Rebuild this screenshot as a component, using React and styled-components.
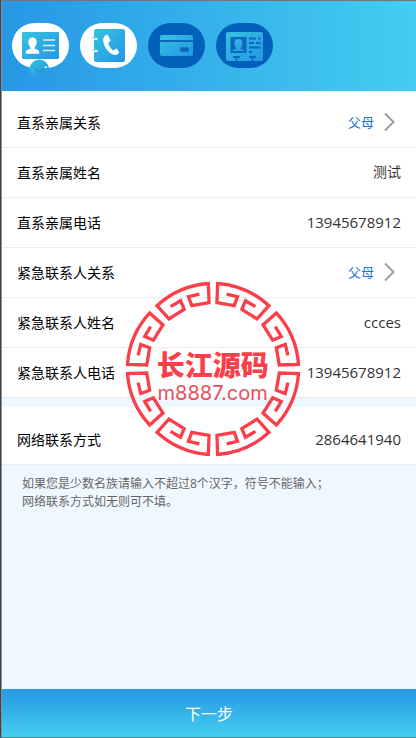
import React from "react";
import styled, { createGlobalStyle } from "styled-components";

const cjk = `"Noto Sans CJK SC", sans-serif`;

const GlobalStyle = createGlobalStyle`
  *, *::before, *::after { box-sizing: border-box; }
  body { margin: 0; font-family: "Open Sans", ${cjk}; }
`;

const Screen = styled.div`
  position: relative;
  display: flex;
  flex-direction: column;
  min-height: 100vh;
  border: solid #747474;
  border-width: 1px 0 1px 1px;
  border-left-color: #414146;
  padding-left: 1px;
  background: #f0f8ff;
  box-shadow: inset 1px 0 #8a8f95;
`;

const Steps = styled.nav`
  display: flex;
  gap: 11px;
  padding: 22px 10px 23px;
  background: linear-gradient(90deg, #2797e6, #44cdf0);
`;

const Step = styled.button`
  display: flex;
  align-items: flex-start;
  width: 57px;
  height: 45px;
  padding: 0;
  border: 0;
  border-radius: 23px;
  background: ${(p) => (p.$done ? "#fff" : "#0160b9")};
`;

const StepArt = styled.svg`
  flex: none;
  width: 57px;
  height: 52px;
`;

const Form = styled.form`
  flex: 1;
  display: flex;
  flex-direction: column;
`;

const Group = styled.div`
  padding-top: ${(p) => (p.$spaced ? "7px" : "8px")};
  margin-bottom: ${(p) => (p.$spaced ? "9px" : "0")};
  background: #fff;
`;

const Row = styled.div`
  display: flex;
  align-items: center;
  gap: 10px;
  height: 50px;
  padding: 0 15px 2px;
  border-bottom: 1px solid #ececec;
`;

const Label = styled.label`
  flex: none;
  font: 14px/20px ${cjk};
  color: #000;
`;

const Value = styled.input`
  flex: 1;
  min-width: 0;
  padding: 0;
  border: 0;
  background: none;
  text-align: right;
  font: ${(p) => (p.$latin ? "15px" : "14px")}/20px "Open Sans", ${cjk};
  color: #333;
`;

const Choice = styled.select`
  flex: 1;
  min-width: 0;
  padding: 0;
  border: 0;
  appearance: none;
  background: none;
  text-align: right;
  text-align-last: right;
  font: 13px/20px ${cjk};
  color: #1b75d0;
`;

const Arrow = styled.svg`
  flex: none;
  width: 11px;
  height: 20px;
  margin-right: 6px;
`;

const Note = styled.p`
  margin: 0;
  padding: 10px 20px;
  font: 12px/18px "Open Sans", ${cjk};
  color: #666;
`;

const Next = styled.button`
  height: 48px;
  margin-top: auto;
  border: 0;
  background: linear-gradient(#2797e6, #45ceef);
  font: 16px/24px ${cjk};
  color: #fff;
`;

const Stamp = styled.div`
  position: absolute;
  left: 51%;
  top: 50%;
  display: grid;
  place-items: center;
  transform: translate(-50%, -50%);
  color: #fa3e4a;
  pointer-events: none;
`;

const StampRing = styled.svg`
  grid-area: 1 / 1;
  width: 175px;
  height: 175px;
`;

const StampText = styled.div`
  grid-area: 1 / 1;
  padding-top: 18px;
  text-align: center;
  white-space: nowrap;
`;

const StampName = styled.div`
  font: 900 28px/28px ${cjk};
`;

const StampSite = styled.div`
  font: 20px/30px Inter, sans-serif;
  color: #e5505a;
`;

function Gradient({ id }) {
  return (
    <defs>
      <linearGradient id={id} x1="0" y1="0" x2="1" y2="1">
        <stop offset="0" stopColor="#35c4de" />
        <stop offset="1" stopColor="#2594e6" />
      </linearGradient>
    </defs>
  );
}

function IdentityArt() {
  return (
    <StepArt viewBox="0 0 57 52" aria-hidden="true">
      <Gradient id="identity" />
      <rect x="10" y="9" width="37" height="27" rx="1" fill="url(#identity)" />
      <path
        fill="#fff"
        d="M20.500 14.500c-2.700 0-4.200 2-4.200 4.800 0 2.100.8 3.800 2 4.800v1.600l-3.200 1.200c-1.200.5-1.400 1.700-1.400 3.900h13.600c0-2.200-.2-3.400-1.400-3.900l-3.200-1.200v-1.600c1.200-1 2-2.700 2-4.800 0-2.800-1.500-4.800-4.200-4.800z"
      />
      <path d="M31 17h12M31 22.500h12M31 27.500h12" stroke="#d3f1fb" strokeWidth="1.700" />
      <path d="M19.500 52a9.700 9.700 0 1 1 15.500 0z" fill="url(#identity)" />
      <path d="M22.500 45.500l5 4 7.500-6.500" fill="none" stroke="#2390d8" strokeWidth="1.300" />
      <path d="M31.500 45l3-2.500.8 2.500z" fill="#c4eefa" />
    </StepArt>
  );
}

function ContactsArt() {
  return (
    <StepArt viewBox="0 0 57 52" aria-hidden="true">
      <Gradient id="contacts" />
      <rect x="14" y="6" width="31" height="33" rx="2.500" fill="url(#contacts)" />
      <path d="M12 14.200h6v2.600h-6zM12 26.400h6v2.600h-6z" fill="#fff" />
      <path
        d="M12.500 14.700h4.500q1.500 0 1.500 1.300t-1.500 1.300M12.500 26.900h4.500q1.500 0 1.500 1.300t-1.500 1.300"
        fill="none"
        stroke="#35b9e2"
        strokeWidth="1"
      />
      <path
        fill="#fff"
        d="M27.500 11.500c-3 .7-4.700 3-4.300 6.500.8 6.500 5.800 12.700 11.300 14 2.500.5 4.200-.9 4.600-3.200l-2.800-3.300-3.200 1.900c-2.200-1.500-4.200-4.500-4.900-7.400l2.400-2.300z"
      />
    </StepArt>
  );
}

function BankCardArt() {
  return (
    <StepArt viewBox="0 0 57 52" aria-hidden="true">
      <Gradient id="bankcard" />
      <rect x="12" y="12" width="33" height="21" rx="2" fill="url(#bankcard)" />
      <path d="M12 18h33" stroke="#0a69be" strokeWidth="2.200" />
      <circle cx="34.500" cy="26.500" r="2.500" fill="#0a69be" />
      <circle cx="38.500" cy="26.500" r="2.500" fill="#0a69be" />
    </StepArt>
  );
}

function BadgeArt() {
  return (
    <StepArt viewBox="0 0 57 52" aria-hidden="true">
      <Gradient id="badge" />
      <rect x="10" y="9" width="37" height="29" rx="2" fill="url(#badge)" />
      <rect x="14.500" y="14" width="16" height="16" fill="#0a69be" />
      <path
        fill="url(#badge)"
        d="M22.500 16c-2.600 0-4 1.600-4 4.200 0 2 .7 3.500 1.900 4.500v1.300c-2 .2-3.200.7-3.700 2h11.600c-.5-1.300-1.700-1.800-3.700-2v-1.300c1.200-1 1.900-2.500 1.900-4.500 0-2.600-1.400-4.200-4-4.200z"
      />
      <path
        d="M33 15.500h7m2 0h2.500M33 20h5m2 0h4.500M33 24.500h11.500M33 29h3M17 34h7M33 34h7"
        stroke="#0a69be"
        strokeWidth="1.800"
      />
      <path d="M20.500 34v4M36.500 34v4" stroke="#0a69be" strokeWidth="2" />
    </StepArt>
  );
}

const steps = [
  { label: "身份信息", done: true, Art: IdentityArt },
  { label: "联系人", done: true, Art: ContactsArt },
  { label: "银行卡", done: false, Art: BankCardArt },
  { label: "证件", done: false, Art: BadgeArt },
];

const contactFields = [
  { id: "kin-relation", label: "直系亲属关系", value: "父母", choice: true },
  { id: "kin-name", label: "直系亲属姓名", value: "测试" },
  { id: "kin-phone", label: "直系亲属电话", value: "13945678912", latin: true },
  { id: "urgent-relation", label: "紧急联系人关系", value: "父母", choice: true },
  { id: "urgent-name", label: "紧急联系人姓名", value: "ccces", latin: true },
  { id: "urgent-phone", label: "紧急联系人电话", value: "13945678912", latin: true },
];

function Field({ id, label, value, choice, latin }) {
  return (
    <Row>
      <Label htmlFor={id}>{label}</Label>
      {choice ? (
        <>
          <Choice id={id} defaultValue={value}>
            <option>{value}</option>
          </Choice>
          <Arrow viewBox="0 0 11 20" aria-hidden="true">
            <path d="M1 1.500l8.500 8.500L1 18.500" fill="none" stroke="#9b9da1" strokeWidth="2" />
          </Arrow>
        </>
      ) : (
        <Value id={id} defaultValue={value} $latin={latin} />
      )}
    </Row>
  );
}

// One eighth of the ring: an outer arc whose ends curl inward.
const fret =
  "M-128-188L-98-206L-87-180L-133-151L-169-191A256 256 0 0 1-14-258L-12-200L-64-191L-74-218L-41-226";

function Seal() {
  return (
    <Stamp>
      <StampRing viewBox="-264 -264 528 528" aria-hidden="true">
        <g fill="none" stroke="currentColor" strokeWidth="10">
          {["1 1", "-1 1", "1 -1", "-1 -1"].map((flip) => (
            <g key={flip} transform={`scale(${flip})`}>
              <path d={fret} />
              <path d={fret} transform="matrix(0 1 1 0 0 0)" />
            </g>
          ))}
        </g>
      </StampRing>
      <StampText>
        <StampName>长江源码</StampName>
        <StampSite>m8887.com</StampSite>
      </StampText>
    </Stamp>
  );
}

export default function App() {
  return (
    <>
      <GlobalStyle />
      <Screen>
        <Steps>
          {steps.map(({ label, done, Art }) => (
            <Step key={label} type="button" aria-label={label} $done={done}>
              <Art />
            </Step>
          ))}
        </Steps>
        <Form>
          <Group $spaced>
            {contactFields.map((field) => (
              <Field key={field.id} {...field} />
            ))}
          </Group>
          <Group>
            <Field id="network" label="网络联系方式" value="2864641940" latin />
          </Group>
          <Note>
            如果您是少数名族请输入不超过8个汉字，符号不能输入；
            <br />
            网络联系方式如无则可不填。
          </Note>
          <Next type="button">下一步</Next>
        </Form>
        <Seal />
      </Screen>
    </>
  );
}
